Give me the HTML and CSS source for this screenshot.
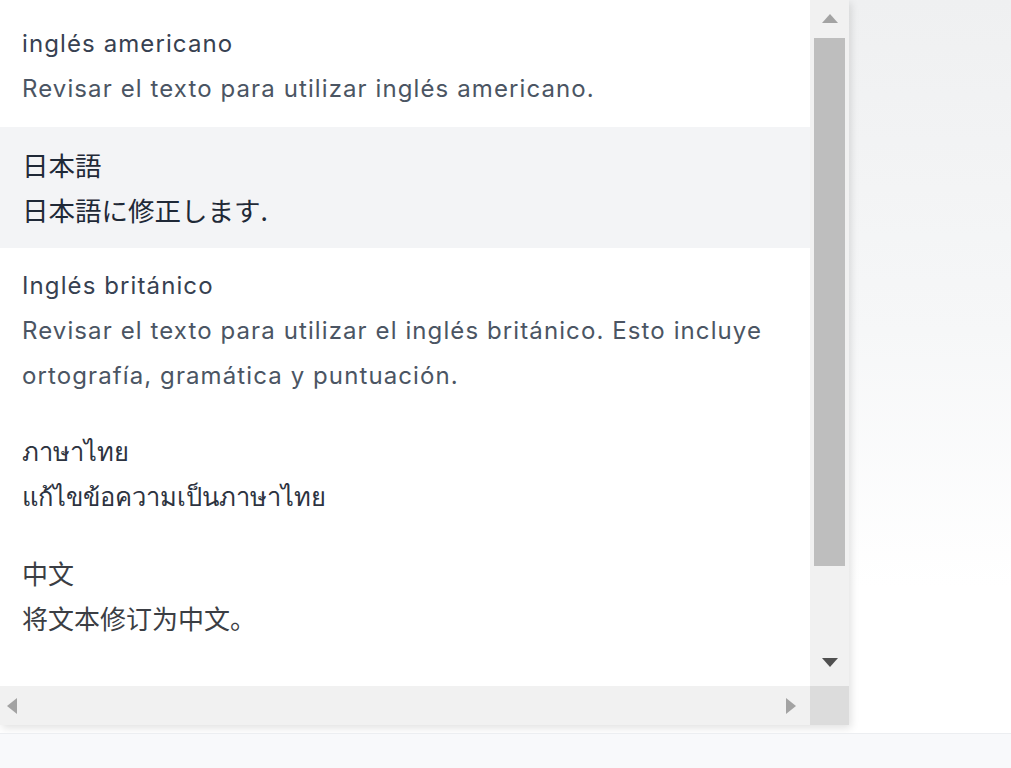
FILE: index.html
```html
<!DOCTYPE html>
<html lang="es">
<head>
    <meta charset="UTF-8">
    <title>Idiomas</title>
    <link rel="stylesheet" href="styles.css">
</head>
<body>
    <div class="page">
        <div class="dropdown">
            <div class="list">
                <div class="item">
                    <div class="item-title">inglés americano</div>
                    <div class="item-desc">Revisar el texto para utilizar inglés americano.</div>
                </div>
                <div class="item active cjk-jp">
                    <div class="item-title">日本語</div>
                    <div class="item-desc">日本語に修正します.</div>
                </div>
                <div class="item">
                    <div class="item-title">Inglés británico</div>
                    <div class="item-desc">Revisar el texto para utilizar el inglés británico. Esto incluye ortografía, gramática y puntuación.</div>
                </div>
                <div class="item thai">
                    <div class="item-title">ภาษาไทย</div>
                    <div class="item-desc">แก้ไขข้อความเป็นภาษาไทย</div>
                </div>
                <div class="item cjk-sc">
                    <div class="item-title">中文</div>
                    <div class="item-desc">将文本修订为中文。</div>
                </div>
            </div>

            <div class="vscroll">
                <span class="arrow arrow-up"></span>
                <div class="thumb"></div>
                <span class="arrow arrow-down"></span>
            </div>

            <div class="hscroll">
                <span class="arrow arrow-left"></span>
                <span class="arrow arrow-right"></span>
            </div>

            <div class="corner"></div>
        </div>
    </div>
    <div class="footer"></div>
</body>
</html>
```

FILE: styles.css
```css
body {
    margin: 0;
    font-family: Inter, "Noto Sans", "Noto Sans CJK JP", sans-serif;
    background-color: #fff;
}
.page {
    height: 733px;
    background: linear-gradient(180deg, #eff0f1 0%, #f6f7f8 45%, #fff 80%);
}
.footer {
    height: 35px;
    background-color: #f8f9fb;
    border-top: 1px solid #eceef1;
}
.dropdown {
    display: grid;
    grid-template-columns: 810px 39px;
    grid-template-rows: 686px 39px;
    width: 849px;
    background-color: #fff;
    box-shadow: 2px 3px 8px rgba(0, 0, 0, 0.12);
}
.list {
    overflow: hidden;
    padding-top: 6px;
}
.item {
    padding: 15px 22px 16px;
    font-size: 24px;
    line-height: 45px;
    letter-spacing: 1.1px;
}
.item.active {
    background-color: #f3f4f6;
}
.item-title {
    color: #374151;
}
.item-desc {
    color: #4b5563;
}
.cjk-jp {
    font-family: "Noto Sans CJK JP", sans-serif;
    font-size: 26.5px;
    letter-spacing: 0;
}
.cjk-jp .item-title, .cjk-jp .item-desc {
    color: #1f2937;
}
.cjk-sc {
    font-family: "Noto Sans CJK SC", sans-serif;
    font-size: 26px;
    letter-spacing: 0;
}
.cjk-sc .item-title, .cjk-sc .item-desc {
    color: #3b3e44;
}
.thai {
    font-size: 25.5px;
    letter-spacing: 0;
}
.thai .item-title, .thai .item-desc {
    color: #2d3340;
}

/* scrollbars */
.vscroll {
    display: flex;
    flex-direction: column;
    align-items: center;
    background-color: #f1f1f1;
}
.thumb {
    width: 31px;
    height: 528px;
    margin: 15px 0 92px;
    background-color: #bebebe;
}
.hscroll {
    display: flex;
    justify-content: space-between;
    align-items: center;
    padding: 0 14px 0 7px;
    background-color: #f1f1f1;
}
.corner {
    background-color: #dcdcdc;
}
.arrow {
    display: block;
    width: 0;
    height: 0;
}
.arrow-up {
    margin-top: 14px;
    border-left: 8px solid transparent;
    border-right: 8px solid transparent;
    border-bottom: 9px solid #a3a3a3;
}
.arrow-down {
    border-left: 8px solid transparent;
    border-right: 8px solid transparent;
    border-top: 9px solid #505050;
}
.arrow-left {
    border-top: 8px solid transparent;
    border-bottom: 8px solid transparent;
    border-right: 10px solid #a3a3a3;
}
.arrow-right {
    border-top: 8px solid transparent;
    border-bottom: 8px solid transparent;
    border-left: 10px solid #a3a3a3;
}
```
